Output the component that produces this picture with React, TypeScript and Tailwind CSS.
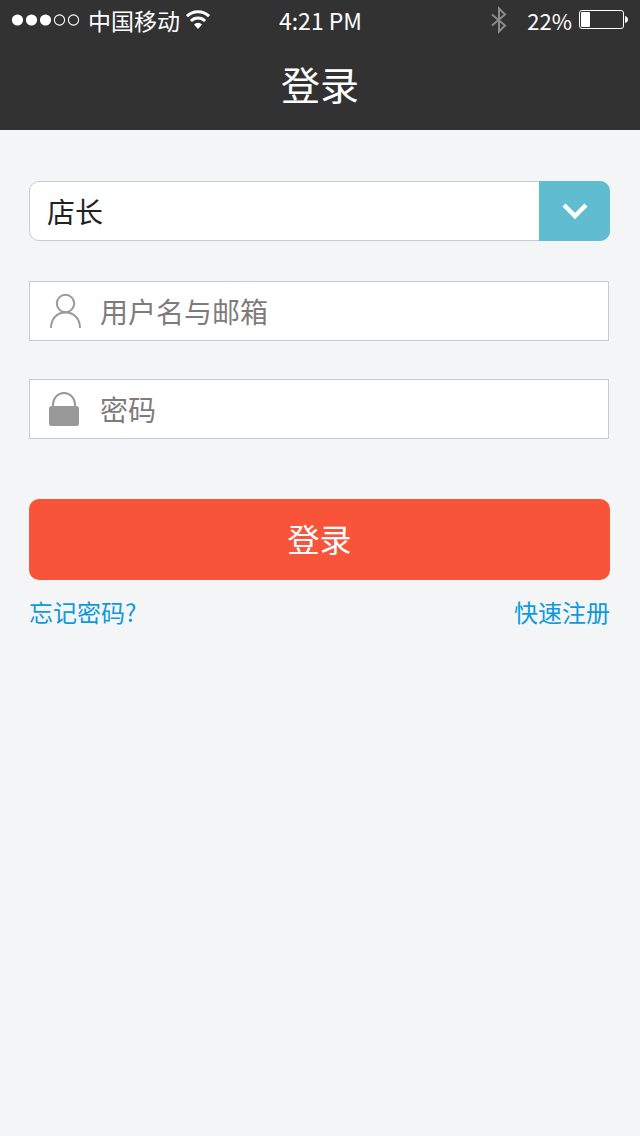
import { useState } from 'react';

const roles = ['店长', '店员', '管理员'];

function SignalDots() {
    return (
        <svg width="68" height="12" viewBox="0 0 68 12" aria-hidden="true">
            {[6, 20, 34].map((cx) => (
                <circle key={cx} cx={cx - 0.5} cy="6" r="5.6" fill="#fff" />
            ))}
            {[48, 62].map((cx) => (
                <circle key={cx} cx={cx - 0.5} cy="6" r="5.1" fill="none" stroke="#fff" strokeWidth="1.1" />
            ))}
        </svg>
    );
}

function WifiIcon() {
    return (
        <svg width="24" height="20" viewBox="0 0 24 20" fill="none" stroke="#fff" aria-hidden="true">
            <path d="M1 6.2a15.6 15.6 0 0 1 22 0" strokeWidth="3" />
            <path d="M4.9 11a10 10 0 0 1 14.200 0" strokeWidth="3" />
            <path d="M12 19l-4-4.500a5.600 5.600 0 0 1 8 0z" fill="#fff" stroke="none" />
        </svg>
    );
}

function BluetoothIcon() {
    return (
        <svg width="16" height="28" viewBox="0 0 16 28" fill="none" stroke="#8c8c8c" strokeWidth="2" aria-hidden="true">
            <path d="M1 8.500l13 11-6 6v-23l6 6-13 11" />
        </svg>
    );
}

function BatteryIcon() {
    return (
        <svg width="50" height="20" viewBox="0 0 50 20" aria-hidden="true">
            <rect x="0.5" y="0.5" width="44" height="18" rx="2.5" fill="none" stroke="#fff" />
            <rect x="2" y="2" width="9" height="15" rx="1" fill="#fff" />
            <path d="M46 6c4 1 4 6 0 7z" fill="#fff" />
        </svg>
    );
}

function StatusBar() {
    return (
        <div className="grid h-10 grid-cols-[1fr_auto_1fr] items-center pl-3 pr-[11px] text-[23px] leading-6">
            <div className="flex items-center">
                <SignalDots />
                <span className="ml-2 mr-1.5">中国移动</span>
                <WifiIcon />
            </div>
            <span>4:21 PM</span>
            <div className="flex items-center justify-end">
                <BluetoothIcon />
                <span className="ml-5 mr-[7px] text-[22px]">22%</span>
                <BatteryIcon />
            </div>
        </div>
    );
}

function UserIcon() {
    return (
        <svg width="32" height="36" viewBox="0 0 32 36" fill="none" stroke="#999" strokeWidth="2" aria-hidden="true">
            <circle cx="16.5" cy="10.5" r="8.7" />
            <path d="M2 35c0-9.500 6-15.500 14.500-15.500S31 25.500 31 35" />
        </svg>
    );
}

function LockIcon() {
    return (
        <svg width="32" height="36" viewBox="0 0 32 36" aria-hidden="true">
            <path d="M4 16v-2.500a11 11.500 0 0 1 22 0V16" fill="none" stroke="#999" strokeWidth="2" />
            <rect x="0" y="15" width="30" height="20" rx="2.5" fill="#999" />
        </svg>
    );
}

const fieldClass = 'mr-px flex h-15 items-center gap-[19px] border border-[#c9cacd] bg-white pl-[19px] pr-4';
const inputClass = 'min-w-0 flex-1 bg-transparent text-[28px] text-[#222] outline-none placeholder:text-[#7f7b7b]';

export default function App() {
    const [role, setRole] = useState(roles[0]);
    const [username, setUsername] = useState('');
    const [password, setPassword] = useState('');

    return (
        <div className="min-h-screen bg-[#f3f5f7] font-['Noto_Sans_CJK_SC',sans-serif]">
            <header className="bg-[#323232] text-white">
                <StatusBar />
                <h1 className="flex h-[90px] items-center justify-center pb-1 text-[39px]">登录</h1>
            </header>

            <form className="pl-[29px] pr-[30px] pt-[51px]" onSubmit={(e) => e.preventDefault()}>
                <div className="relative">
                    <select
                        aria-label="角色"
                        value={role}
                        onChange={(e) => setRole(e.target.value)}
                        className="block h-15 w-full appearance-none rounded-[10px] border border-[#c9cacd] bg-white pl-[17px] text-[28px] text-[#222]"
                    >
                        {roles.map((r) => (
                            <option key={r}>{r}</option>
                        ))}
                    </select>
                    {/* Arrow cap over the right end of the select */}
                    <span className="pointer-events-none absolute inset-y-0 right-0 flex w-[71px] items-center justify-center rounded-r-[10px] bg-[#5fbdcf]">
                        <svg width="26" height="18" viewBox="0 0 26 18" fill="none" stroke="#fff" strokeWidth="4.5" aria-hidden="true">
                            <path d="M2 3l11 11L24 3" />
                        </svg>
                    </span>
                </div>

                <label className={`${fieldClass} mt-10`}>
                    <UserIcon />
                    <input
                        type="text"
                        aria-label="用户名与邮箱"
                        placeholder="用户名与邮箱"
                        value={username}
                        onChange={(e) => setUsername(e.target.value)}
                        className={inputClass}
                    />
                </label>

                <label className={`${fieldClass} mt-[38px]`}>
                    <LockIcon />
                    <input
                        type="password"
                        aria-label="密码"
                        placeholder="密码"
                        value={password}
                        onChange={(e) => setPassword(e.target.value)}
                        className={inputClass}
                    />
                </label>

                <button type="submit" className="mt-15 h-[81px] w-full rounded-[10px] bg-[#f75439] pb-1 text-[32px] text-white">
                    登录
                </button>

                <div className="mt-4 flex justify-between text-[24px] leading-8 text-[#0f9adb]">
                    <a href="#forgot">忘记密码?</a>
                    <a href="#register">快速注册</a>
                </div>
            </form>
        </div>
    );
}
